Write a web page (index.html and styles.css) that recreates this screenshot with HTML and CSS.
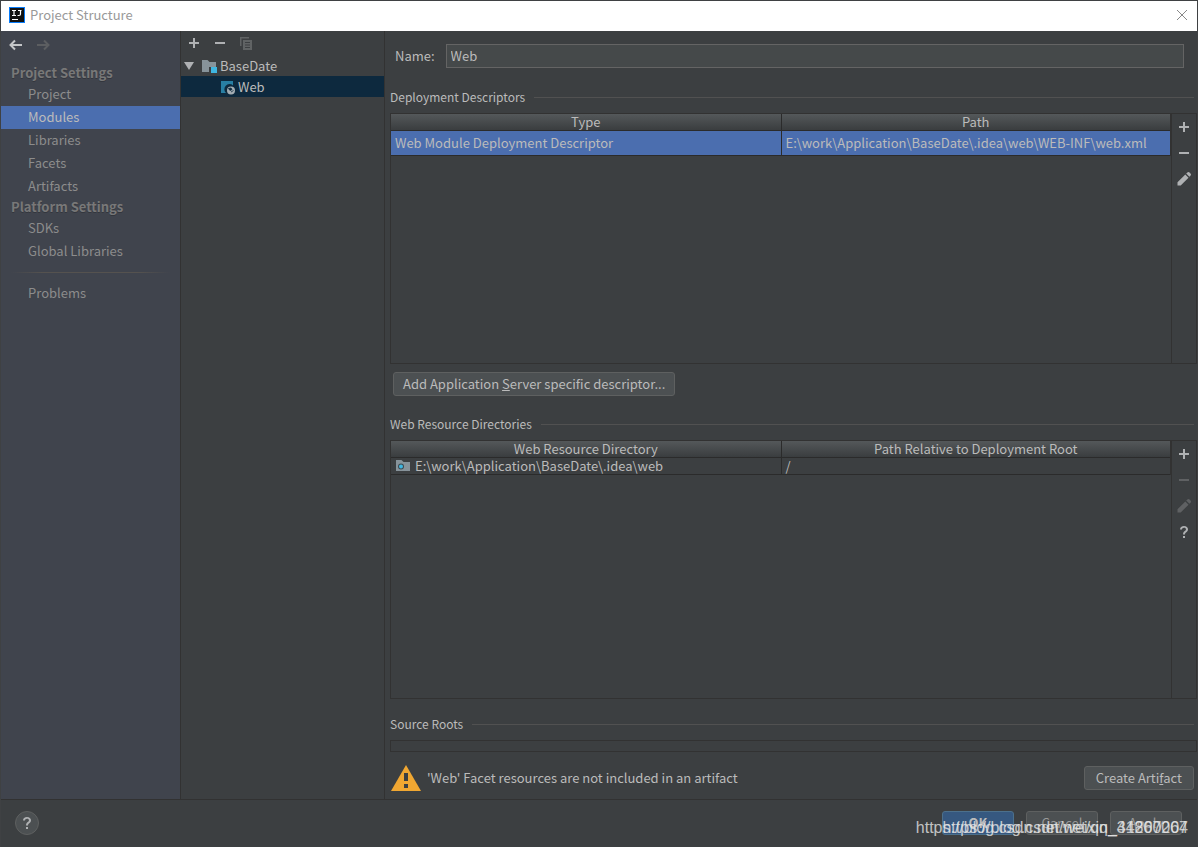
FILE: index.html
```html
<!DOCTYPE html>
<html lang="en">
<head>
<meta charset="utf-8">
<title>Project Structure</title>
<link rel="stylesheet" href="styles.css">
</head>
<body>
<svg class="defs" aria-hidden="true">
  <symbol id="plus" viewBox="0 0 16 16"><path d="M7 3h2v4h4v2H9v4H7V9H3V7h4z"/></symbol>
  <symbol id="minus" viewBox="0 0 16 16"><path d="M3 7h10v2H3z"/></symbol>
  <symbol id="pencil" viewBox="0 0 16 16"><path d="M1.500 14.500V11.300L9.300 3.500l3.200 3.200-7.800 7.800zM10.200 2.600l.9-.9a1.800 1.800 0 0 1 2.700 0l.5.500a1.800 1.800 0 0 1 0 2.700l-.9.900z"/></symbol>
  <symbol id="question" viewBox="0 0 16 16"><path d="M4 5.500C4 3.300 5.700 2 8 2s4 1.300 4 3.300c0 1.500-.8 2.200-1.700 3-.9.700-1.300 1.100-1.300 2.200H7c0-2 .8-2.700 1.800-3.500.8-.6 1.200-1 1.200-1.700C10 4.400 9.200 3.800 8 3.800S6 4.500 6 5.500zM7 12h2v2H7z"/></symbol>
</svg>

<header class="titlebar">
  <svg class="logo" viewBox="0 0 16 16"><rect width="16" height="16" fill="#087cfa"/><rect x="1" y="1" width="14" height="14" fill="#111"/><path d="M3 3.500h4M5 3.500v5M3 8.500h4M9 3.500h3.500M11.500 3.500v3.500q0 1.500-1.500 1.500H8.500M3 12.500h6" fill="none" stroke="#fff" stroke-width="1.200"/></svg>
  <h1 class="window-title">Project Structure</h1>
  <button class="close" aria-label="Close"><svg viewBox="0 0 12 12"><path d="M1 1l10 10M11 1L1 11" stroke="#888" fill="none"/></svg></button>
</header>

<div class="workspace">
  <nav class="sidebar">
    <div class="history">
      <button class="icon-button" aria-label="Back"><svg viewBox="0 0 16 16"><path d="M14 8H3M7 3.500L2.500 8 7 12.500" fill="none" stroke="#c4c6c8" stroke-width="2"/></svg></button>
      <button class="icon-button" aria-label="Forward" disabled><svg viewBox="0 0 16 16"><path d="M2 8h11M9 3.500l4.500 4.500L9 12.500" fill="none" stroke="#5c5e61" stroke-width="2"/></svg></button>
    </div>
    <h2 class="group">Project Settings</h2>
    <a class="nav-item" href="#">Project</a>
    <a class="nav-item active" href="#">Modules</a>
    <a class="nav-item" href="#">Libraries</a>
    <a class="nav-item" href="#">Facets</a>
    <a class="nav-item" href="#">Artifacts</a>
    <h2 class="group">Platform Settings</h2>
    <a class="nav-item" href="#">SDKs</a>
    <a class="nav-item" href="#">Global Libraries</a>
    <hr class="nav-rule">
    <a class="nav-item" href="#">Problems</a>
  </nav>

  <aside class="modules">
    <div class="module-tools">
      <button class="icon-button" aria-label="Add"><svg><use href="#plus"/></svg></button>
      <button class="icon-button" aria-label="Remove"><svg><use href="#minus"/></svg></button>
      <button class="icon-button" aria-label="Copy" disabled><svg viewBox="0 0 16 16"><path d="M2 2h9v1.500H3.500V11H2z" fill="#606364"/><path d="M5 5h9v10H5z" fill="#606364"/><path d="M7 7.500h5M7 10h5M7 12.500h5" stroke="#3c3f41"/></svg></button>
    </div>
    <ul class="tree">
      <li class="tree-row root"><svg class="arrow" viewBox="0 0 10 8"><path d="M0 0h10L5 8z" fill="#afb1b3"/></svg><svg class="icon" viewBox="0 0 16 16"><path d="M1 2h5.500l2 2H15v5H8v5H1z" fill="#87939a"/><path d="M10 9h6v6h-6z" fill="#40b6e0"/></svg>BaseDate</li>
      <li class="tree-row child selected"><svg class="icon" viewBox="0 0 16 16"><path d="M1 2h12v4.500A5 5 0 0 0 6 14H1z" fill="#287fa4"/><circle cx="11" cy="11.500" r="4" fill="#a4adb3"/><path d="M8.500 9.500l2.500-.5 1 1.500-2 1zM11 13l2.500-1.500" fill="#0d293e" stroke="#0d293e" stroke-width=".8"/></svg>Web</li>
    </ul>
  </aside>

  <main class="editor">
    <div class="name-row"><label for="name">Name:</label><input id="name" type="text" value="Web"></div>

    <h3 class="section">Deployment Descriptors</h3>
    <div class="panel first">
      <table class="grid">
        <thead><tr><th>Type</th><th>Path</th></tr></thead>
        <tbody><tr class="chosen"><td>Web Module Deployment Descriptor</td><td>E:\work\Application\BaseDate\.idea\web\WEB-INF\web.xml</td></tr></tbody>
      </table>
      <div class="side-tools">
        <button class="icon-button" aria-label="Add descriptor"><svg><use href="#plus"/></svg></button>
        <button class="icon-button" aria-label="Remove descriptor"><svg><use href="#minus"/></svg></button>
        <button class="icon-button" aria-label="Edit descriptor"><svg><use href="#pencil"/></svg></button>
      </div>
    </div>
    <button class="button add-descriptor">Add Application <u>S</u>erver specific descriptor...</button>

    <h3 class="section">Web Resource Directories</h3>
    <div class="panel second">
      <table class="grid">
        <thead><tr><th>Web Resource Directory</th><th>Path Relative to Deployment Root</th></tr></thead>
        <tbody><tr class="plain"><td><svg class="folder" viewBox="0 0 16 16"><path d="M1 2h5.500l2 2H15v9H1z" fill="#87939a"/><circle cx="6" cy="8.500" r="3" fill="#3c4b52"/><circle cx="6" cy="8.500" r="2" fill="#40b6e0"/></svg>E:\work\Application\BaseDate\.idea\web</td><td>/</td></tr></tbody>
      </table>
      <div class="side-tools">
        <button class="icon-button" aria-label="Add directory"><svg><use href="#plus"/></svg></button>
        <button class="icon-button" aria-label="Remove directory" disabled><svg><use href="#minus"/></svg></button>
        <button class="icon-button" aria-label="Edit directory" disabled><svg><use href="#pencil"/></svg></button>
        <button class="icon-button" aria-label="Directory help"><svg><use href="#question"/></svg></button>
      </div>
    </div>

    <h3 class="section">Source Roots</h3>
    <div class="roots"></div>
    <div class="notice">
      <svg class="warning" viewBox="0 0 30 26"><path d="M15 0l15 26H0z" fill="#f0a732"/><path d="M13 8h4v8h-4zM13 19h4v4h-4z" fill="#3c3f41"/></svg>
      <p>'Web' Facet resources are not included in an artifact</p>
      <button class="button">Create Arti<u>f</u>act</button>
    </div>
  </main>
</div>

<footer class="footer">
  <button class="help" aria-label="Help"><svg><use href="#question"/></svg></button>
  <div class="actions">
    <button class="button primary">OK</button>
    <button class="button muted">Cancel</button>
    <button class="button muted">Apply</button>
    <span class="watermark">https://blog.csdn.net/weixin_44800264</span>
    <span class="watermark">https://blog.csdn.net/qq_31267007</span>
  </div>
</footer>
</body>
</html>
```
FILE: styles.css
```css
* { box-sizing: border-box; }

body {
  margin: 0;
  min-height: 100vh;
  display: flex;
  flex-direction: column;
  border: 1px solid #3f4143;
  border-bottom: 0;
  background: #3c3f41;
  color: #bbbbbb;
  font: 13px/18px "Noto Sans CJK SC", "Noto Sans", sans-serif;
}

h1, h2, h3, p, ul { margin: 0; padding: 0; }
button { font: inherit; color: inherit; }
.defs { display: none; }

.icon-button {
  width: 16px;
  height: 16px;
  padding: 0;
  border: 0;
  background: none;
  fill: #afb1b3;
}
.icon-button:disabled { fill: #5f6163; }
.icon-button svg { display: block; width: 16px; height: 16px; }

.titlebar {
  display: flex;
  flex: none;
  align-items: center;
  gap: 5px;
  height: 30px;
  padding: 0 9px 2px 8px;
  background: #ffffff;
  color: #999999;
}
.logo { width: 16px; height: 16px; }
.window-title { flex: 1; font-size: 13px; font-weight: 400; }
.close { padding: 0; border: 0; background: none; }
.close svg { display: block; width: 12px; height: 12px; }

.workspace {
  flex: 1;
  display: grid;
  grid-template-columns: 180px 204px 1fr;
  border-bottom: 1px solid #323232;
}

.sidebar { border-right: 1px solid #323232; background: #40444d; color: #8c8c8c; }
.history { display: flex; gap: 11px; padding: 6px 6px 11px 7px; }
.group {
  padding: 0 0 2px 10px;
  font-size: 13px;
  line-height: 17px;
  font-weight: 700;
  color: #787878;
  text-shadow: 0 1px #33363d;
}
.nav-item {
  display: block;
  padding: 0 0 2px 27px;
  line-height: 21px;
  color: inherit;
  text-decoration: none;
}
.nav-item.active { background: #4b6eaf; color: #bbbbbb; }
.nav-rule {
  height: 1px;
  margin: 9px 10px;
  border: 0;
  background: linear-gradient(90deg, transparent, #55524f 20%, #55524f 80%, transparent);
}

.modules { border-right: 1px solid #323232; }
.module-tools { display: flex; gap: 10px; padding: 4px 5px; }
.tree { list-style: none; }
.tree-row { display: flex; align-items: center; gap: 3px; height: 21px; padding-left: 3px; line-height: 16px; }
.tree-row.child { padding-left: 39px; gap: 2px; }
.tree-row.selected { background: #0d293e; }
.arrow { width: 10px; height: 8px; margin-right: 4px; }
.icon { width: 16px; height: 16px; }

.editor { display: flex; flex-direction: column; min-width: 0; padding-left: 5px; }
.name-row { display: flex; align-items: center; gap: 11px; padding: 13px 13px 4px 5px; }
.name-row input {
  flex: 1;
  min-width: 0;
  height: 24px;
  padding: 0 4px 2px;
  border: 1px solid #646464;
  background: #45494a;
  color: inherit;
  font: inherit;
}
.section {
  display: flex;
  align-items: center;
  gap: 9px;
  margin: 16px 3px 7px 0;
  font-size: 12px;
  font-weight: 400;
}
.section::after { content: ""; flex: 1; height: 1px; background: #515151; }

.panel {
  display: grid;
  grid-template-columns: 1fr 25px;
  align-items: start;
  border: 1px solid #323232;
}
.first { flex: 251 1 251px; }
.second { flex: 259 1 259px; }
.grid { width: 100%; table-layout: fixed; border-collapse: separate; border-spacing: 0; border-right: 1px solid #323232; }
.grid th {
  height: 17px;
  padding: 0;
  line-height: 16px;
  font-weight: 400;
  background: linear-gradient(#54585a, #3a3d3f);
  border-bottom: 1px solid #2b2b2b;
}
.grid th + th, .grid td + td { border-left: 1px solid #2b2b2b; }
.grid td { padding: 0 4px; border-bottom: 1px solid #2b2b2b; }
.chosen td { height: 25px; background: #4b6eaf; }
.plain td { height: 17px; line-height: 16px; }
.folder { width: 16px; height: 16px; margin-right: 4px; vertical-align: top; }
.side-tools {
  align-self: stretch;
  display: flex;
  flex-direction: column;
  align-items: center;
  gap: 10px;
  padding-top: 5px;
  border-left: 1px solid #323232;
}

.button {
  height: 24px;
  padding: 0 11px;
  border: 1px solid #5e6060;
  border-radius: 3px;
  background: #4c5052;
  line-height: 20px;
  white-space: nowrap;
}
.add-descriptor { align-self: flex-start; margin: 8px 0 3px 3px; padding: 0 9px; }
.roots { height: 12px; border: 1px solid #323232; }
.notice { display: flex; align-items: center; gap: 6px; padding: 13px 3px 8px 1px; }
.notice p { flex: 1; }
.warning { width: 30px; height: 26px; }

.footer { display: flex; flex: none; align-items: center; justify-content: space-between; height: 47px; padding: 0 15px 1px 14px; }
.help {
  width: 24px;
  height: 24px;
  padding: 3px;
  border: 1px solid #5e6060;
  border-radius: 50%;
  background: #4c5052;
  fill: #afb1b3;
}
.help svg { display: block; width: 16px; height: 16px; }
.actions { position: relative; display: flex; gap: 12px; }
.actions .button { width: 72px; }
.actions .primary { border-color: #4c708c; background: #365880; font-weight: 700; }
.actions .muted { color: #999999; }
.watermark {
  position: absolute;
  right: -6px;
  top: 8px;
  color: rgba(230, 230, 230, 0.8);
  font: 16px/18px "Liberation Sans", Arial, sans-serif;
  white-space: nowrap;
}
```
